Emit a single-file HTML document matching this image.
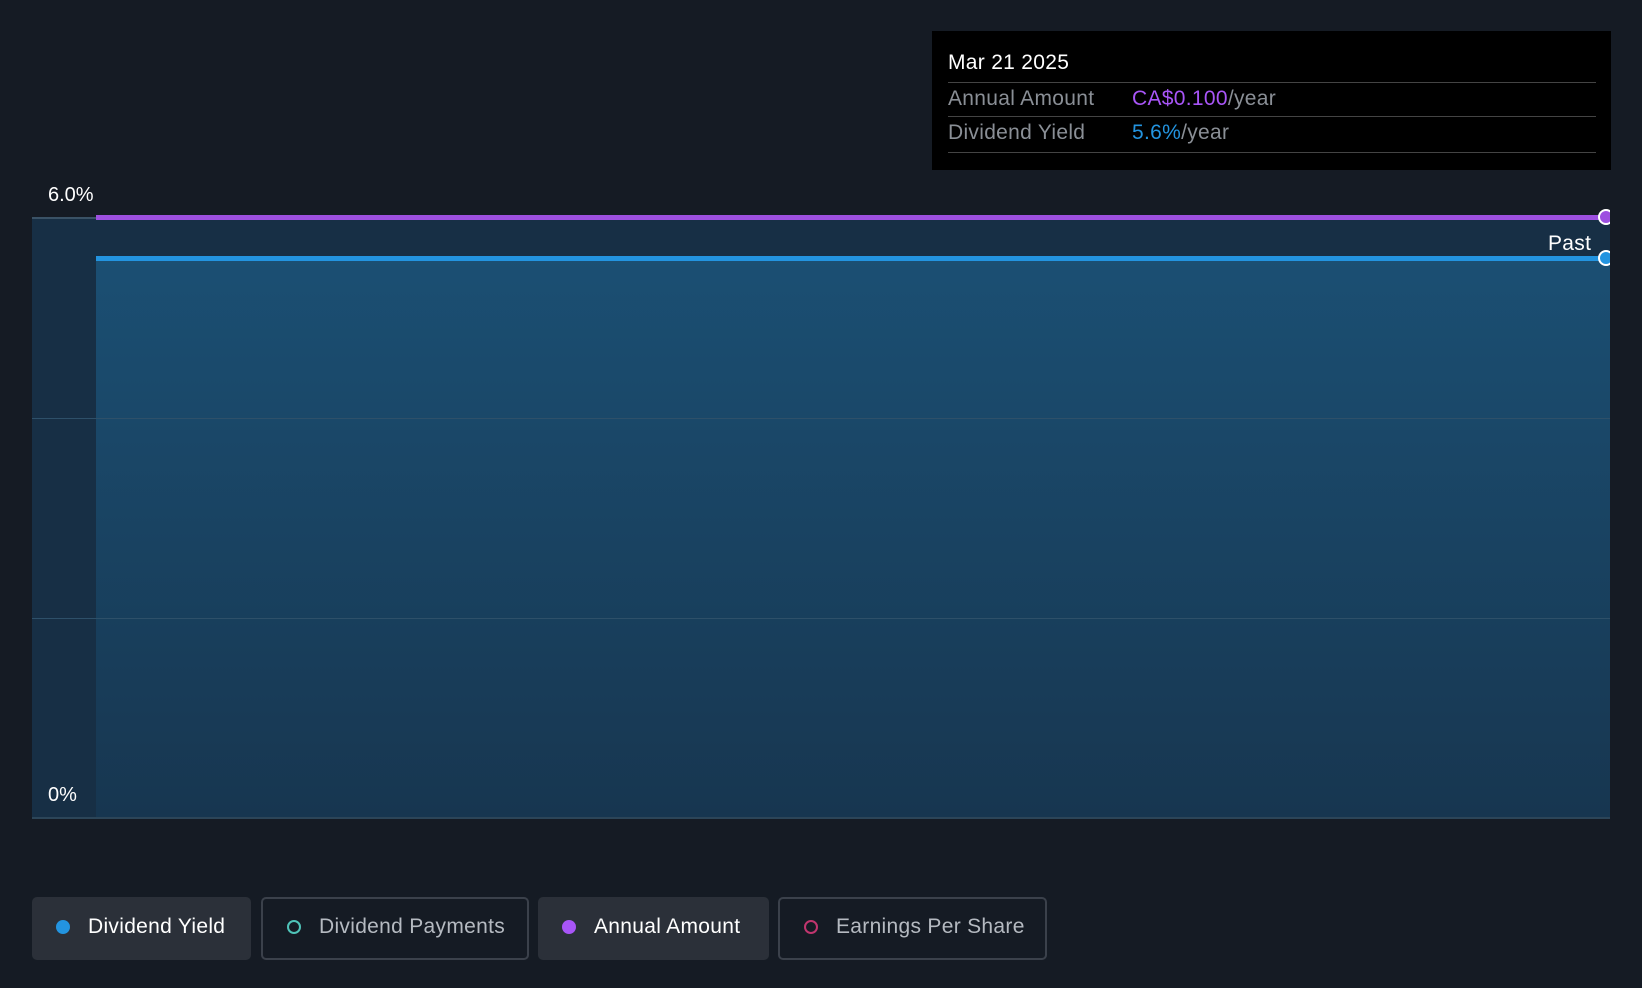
<!DOCTYPE html>
<html><head><style>
body{margin:0;width:1642px;height:988px;background:#151b24;font-family:"Liberation Sans",sans-serif;position:relative;overflow:hidden}
.a{position:absolute}
.btn{position:absolute;top:897px;height:63px;border-radius:5px;box-sizing:border-box;font-size:21px;display:flex;align-items:center;padding-left:24px;padding-bottom:4px;letter-spacing:0.3px}
.dot{width:14px;height:14px;border-radius:50%;margin-right:18px;box-sizing:border-box}
</style></head><body>
<div class="a" style="left:32px;top:218px;width:1578px;height:600px;background:#172f45"></div>
<div class="a" style="left:32px;top:217px;width:64px;height:2px;background:#3a5266"></div>
<div class="a" style="left:96px;top:258px;width:1514px;height:560px;background:linear-gradient(#1b4f73,#173650)"></div>
<div class="a" style="left:32px;top:418px;width:1578px;height:1px;background:#2e5069"></div>
<div class="a" style="left:32px;top:618px;width:1578px;height:1px;background:#2e5069"></div>
<div class="a" style="left:32px;top:817px;width:1578px;height:2px;background:#2c4558"></div>
<div class="a" style="left:96px;top:215px;width:1510px;height:5px;background:#9d50e0"></div>
<div class="a" style="left:96px;top:256px;width:1510px;height:5px;background:#2394e0"></div>
<div class="a" style="left:1598px;top:209px;width:16px;height:16px;border-radius:50%;background:#9d50e0;border:2px solid #fff;box-sizing:border-box"></div>
<div class="a" style="left:1598px;top:250px;width:16px;height:16px;border-radius:50%;background:#2394e0;border:2px solid #fff;box-sizing:border-box"></div>
<div class="a" style="left:1610px;top:200px;width:32px;height:80px;background:#151b24"></div>
<div class="a" style="left:48px;top:184px;color:#fff;font-size:20px">6.0%</div>
<div class="a" style="left:48px;top:784px;color:#fff;font-size:20px">0%</div>
<div class="a" style="left:1548px;top:232px;color:#fff;font-size:21px;letter-spacing:0.3px">Past</div>
<div class="a" style="left:932px;top:31px;width:679px;height:139px;background:#000"></div>
<div class="a" style="left:948px;top:51px;color:#fff;font-size:21px;letter-spacing:0.3px">Mar 21 2025</div>
<div class="a" style="left:948px;top:82px;width:648px;height:1px;background:#444"></div>
<div class="a" style="left:948px;top:87px;color:#8a8f96;font-size:21px;letter-spacing:0.3px">Annual Amount</div>
<div class="a" style="left:1132px;top:87px;color:#8a8f96;font-size:21px;letter-spacing:0.3px"><span style="color:#a855f7">CA$0.100</span>/year</div>
<div class="a" style="left:948px;top:116px;width:648px;height:1px;background:#444"></div>
<div class="a" style="left:948px;top:121px;color:#8a8f96;font-size:21px;letter-spacing:0.3px">Dividend Yield</div>
<div class="a" style="left:1132px;top:121px;color:#8a8f96;font-size:21px;letter-spacing:0.3px"><span style="color:#2394e0">5.6%</span>/year</div>
<div class="a" style="left:948px;top:152px;width:648px;height:1px;background:#444"></div>
<div class="btn" style="left:32px;width:219px;background:#2b3039;color:#fff"><div class="dot" style="background:#2394e0"></div>Dividend Yield</div>
<div class="btn" style="left:261px;width:268px;border:2px solid #3b414b;color:#b5bac1"><div class="dot" style="border:2px solid #4fc3b8"></div>Dividend Payments</div>
<div class="btn" style="left:538px;width:231px;background:#2b3039;color:#fff"><div class="dot" style="background:#a855f7"></div>Annual Amount</div>
<div class="btn" style="left:778px;width:269px;border:2px solid #3b414b;color:#b5bac1"><div class="dot" style="border:2px solid #c0356e"></div>Earnings Per Share</div>
</body></html>
